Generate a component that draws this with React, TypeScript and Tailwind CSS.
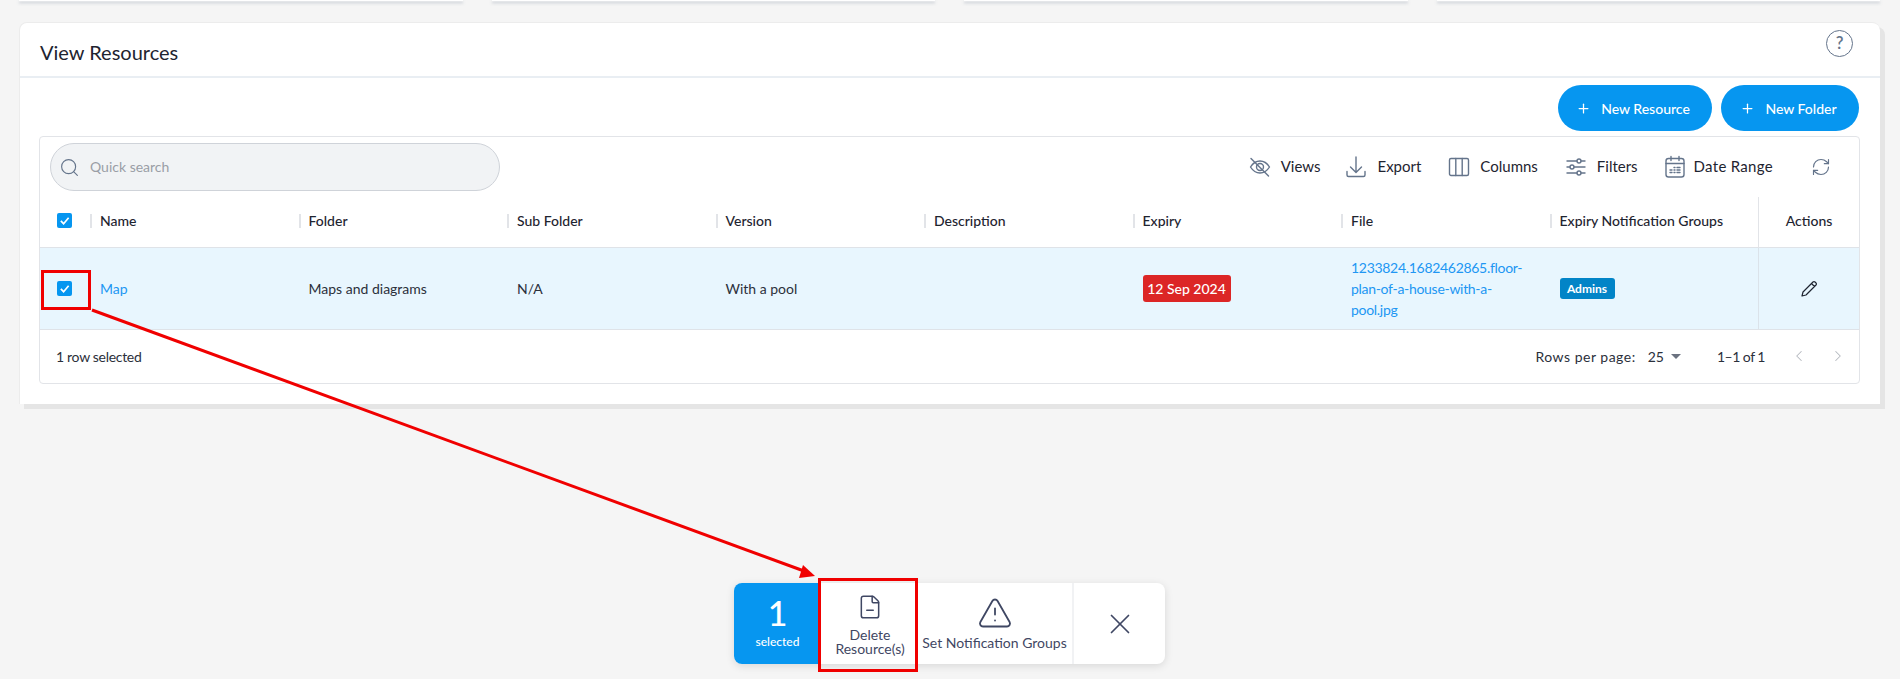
import { ChevronLeft, ChevronRight, FileMinus, Plus, RefreshCw, Search, TriangleAlert, X } from 'lucide-react';

const FONT = "font-['Lato',sans-serif]";

const COLUMNS = ['Name', 'Folder', 'Sub Folder', 'Version', 'Description', 'Expiry', 'File', 'Expiry Notification Groups'];

function Check() {
  return (
    <span className="w-[15px] h-[15px] rounded-[2px] bg-[#0696f0] flex items-center justify-center shrink-0">
      <svg width="11" height="11" viewBox="0 0 12 12" fill="none" stroke="white" strokeWidth="1.8">
        <path d="M2 6.5 5 9.5 10.5 3" />
      </svg>
    </span>
  );
}

function ToolIcon({ name }: { name: string }) {
  const common = { fill: 'none', stroke: '#64748b', strokeWidth: 1.4, strokeLinecap: 'round' as const, strokeLinejoin: 'round' as const };
  if (name === 'views') {
    return (
      <svg width="24" height="24" viewBox="0 0 24 24" {...common}>
        <path d="M2.5 12C5 8 8 6 12 6s7 2 9.500 6c-2.500 4-5.500 6-9.500 6s-7-2-9.500-6Z" />
        <circle cx="12" cy="12" r="3.500" />
        <path d="M3 3.500 20.500 21" />
      </svg>
    );
  }
  if (name === 'export') {
    return (
      <svg width="24" height="24" viewBox="0 0 24 24" {...common}>
        <path d="M12 2v15M6.500 12l5.500 5.500 5.500-5.500" />
        <path d="M3 16.500V20a1.500 1.500 0 0 0 1.500 1.500h15A1.500 1.500 0 0 0 21 20v-3.500" />
      </svg>
    );
  }
  if (name === 'columns') {
    return (
      <svg width="22" height="22" viewBox="0 0 22 22" {...common}>
        <rect x="1.500" y="2.500" width="19" height="17" rx="1.500" />
        <path d="M7.800 2.500v17M14.200 2.500v17" />
      </svg>
    );
  }
  if (name === 'filters') {
    return (
      <svg width="22" height="22" viewBox="0 0 22 22" {...common}>
        <path d="M2 5h10M16 5h4M2 11h3M9 11h11M2 17h10M16 17h4" />
        <circle cx="14" cy="5" r="2" />
        <circle cx="7" cy="11" r="2" />
        <circle cx="14" cy="17" r="2" />
      </svg>
    );
  }
  return (
    <svg width="22" height="24" viewBox="0 0 22 24" {...common}>
      <rect x="2" y="3.500" width="18" height="18.500" rx="2.500" />
      <path d="M2 8.500h18M7 1.500v4M15 1.500v4" />
      <path d="M6 17.500h2M6 15h2M10 17.500h1M10 15h1M10 12.500h1M13 17.500h3M13 15h3M13 12.500h3" />
    </svg>
  );
}

function Tool({ icon, label, className }: { icon: string; label: string; className: string }) {
  return (
    <div className={`flex items-center ${className}`}>
      <ToolIcon name={icon} />
      <span className="text-[15px] text-[#1e2430] pb-[2px]">{label}</span>
    </div>
  );
}

function Cell({ children, className = '' }: { children?: React.ReactNode; className?: string }) {
  return <div className={`w-[208.500px] pl-[10px] flex items-center ${className}`}>{children}</div>;
}

export default function App() {
  return (
    <div className={`${FONT} relative w-[1900px] h-[679px] overflow-hidden bg-[#f5f5f5] text-[#2b303b]`}>
      {/* TOP CARDS */}
      <div className="flex gap-[29px] pl-[19px] pr-[20px] h-[1px]">
        {[0, 1, 2, 3].map((i) => (
          <div key={i} className="flex-1 h-[1px] bg-white shadow-[0_2px_3px_rgba(100,116,139,0.5)]" />
        ))}
      </div>

      {/* VIEW RESOURCES */}
      <div className="mt-[21px] ml-[19px] w-[1861px] h-[382px] bg-white rounded-tl-lg rounded-tr-lg border-l border-t border-[#ececec] shadow-[5px_5px_0_#e5e5e5]">
        <div className="h-[55px] border-b-2 border-[#e9eef3] flex items-center justify-between pl-[20px] pr-[27px]">
          <h1 className="text-[20px] text-[#1e2430] mt-[4px]">View Resources</h1>
          <span className="w-[27px] h-[27px] rounded-full border border-[#64748b] flex items-center justify-center text-[17px] font-semibold text-[#64748b] mt-[-13px]">
            ?
          </span>
        </div>

        <div className="flex justify-end gap-[9px] pr-[21px] pt-[7px]">
          <button className="h-[46px] w-[154px] pr-[4px] rounded-full bg-[#0696f0] text-white text-[14px] font-medium flex items-center justify-center gap-[10px]">
            <Plus size={15} />
            New Resource
          </button>
          <button className="h-[46px] w-[138px] pr-[3px] rounded-full bg-[#0696f0] text-white text-[14px] font-medium flex items-center justify-center gap-[10px]">
            <Plus size={15} />
            New Folder
          </button>
        </div>

        <div className="mt-[5px] ml-[19px] w-[1821px] h-[248px] border border-[#e2e4e8] rounded-[4px]">
          {/* TOOLBAR */}
          <div className="h-[60px] flex items-center justify-between pl-[10px] pr-[28px]">
            <div className="w-[450px] h-[48px] rounded-full bg-[#f1f3f5] border border-[#cfd3d9] flex items-center pl-[8px] gap-[10px]">
              <Search size={21} strokeWidth={1.3} className="text-[#64748b]" />
              <span className="text-[14px] text-[#9a9ea6] pb-[2px]">Quick search</span>
            </div>
            <div className="flex items-center">
              <Tool icon="views" label="Views" className="gap-[9px]" />
              <Tool icon="export" label="Export" className="gap-[9px] ml-[24px]" />
              <Tool icon="columns" label="Columns" className="gap-[10px] ml-[27px]" />
              <Tool icon="filters" label="Filters" className="gap-[10px] ml-[27px]" />
              <Tool icon="calendar" label="Date Range" className="gap-[8px] ml-[26px] tracking-[0.3px]" />
              <RefreshCw size={20} strokeWidth={1.4} className="text-[#64748b] ml-[38px]" />
            </div>
          </div>

          {/* HEADER */}
          <div className="h-[51px] flex border-b border-[#dfe3e8] text-[14px] font-medium text-[#1e2430]">
            <div className="w-[50px] flex items-center pl-[17px] pb-[3px]">
              <Check />
            </div>
            {COLUMNS.map((c) => (
              <div key={c} className="w-[208.500px] flex items-center pb-[3px]">
                <span className="w-[2px] h-[14px] bg-[#e2e4e8] mr-[8px]" />
                {c}
              </div>
            ))}
            <div className="flex-1 flex items-center justify-center border-l border-[#e2e4e8] pb-[3px]">Actions</div>
          </div>

          {/* ROW */}
          <div className="h-[82px] flex bg-[#e8f6fe] border-b border-[#dfe3e8] text-[14px]">
            <div className="w-[50px] flex items-center pl-[17px] pb-[1px]">
              <Check />
            </div>
            <Cell className="text-[#2196f3]">Map</Cell>
            <Cell>Maps and diagrams</Cell>
            <Cell>N/A</Cell>
            <Cell>With a pool</Cell>
            <Cell />
            <div className="w-[208.500px] pl-[10px] flex items-center">
              <span className="h-[27px] w-[88px] rounded-[3px] bg-[#dc2626] text-white font-medium flex items-center justify-center">
                12 Sep 2024
              </span>
            </div>
            <div className="w-[208.500px] pl-[10px] flex items-center">
              <span className="w-[170px] text-[#2196f3] leading-[21px] tracking-[-0.3px]">
                1233824.1682462865.floor-plan-of-a-house-with-a-pool.jpg
              </span>
            </div>
            <div className="w-[208.500px] pl-[10px] flex items-center">
              <span className="h-[21px] w-[55px] rounded-[3px] bg-[#0284c7] text-white text-[12px] font-bold flex items-center justify-center">
                Admins
              </span>
            </div>
            <div className="flex-1 flex items-center justify-center border-l border-[#dbe3ea]">
              <svg width="18" height="18" viewBox="0 0 18 18" fill="none" stroke="#1e2430" strokeWidth="1.2" strokeLinejoin="round">
                <path d="M2 16l1-4L13 2a1.400 1.400 0 0 1 2 0l1 1a1.400 1.400 0 0 1 0 2L6 15l-4 1ZM11.500 3.500l3 3" />
              </svg>
            </div>
          </div>

          {/* FOOTER */}
          <div className="h-[52px] flex items-center justify-between pl-[16px] pr-[12px] text-[14px]">
            <span className="tracking-[-0.3px]">1 row selected</span>
            <div className="flex items-center">
              <span className="tracking-[0.5px]">Rows per page:</span>
              <span className="ml-[12px]">25</span>
              <span className="ml-[7px] w-0 h-0 border-x-[5px] border-x-transparent border-t-[5px] border-t-[#6b7280]" />
              <span className="ml-[36px] tracking-[-0.5px]">1–1 of 1</span>
              <ChevronLeft size={18} strokeWidth={1.4} className="text-[#b5b9bf] ml-[25px]" />
              <ChevronRight size={18} strokeWidth={1.4} className="text-[#b5b9bf] ml-[21px]" />
            </div>
          </div>
        </div>
      </div>

      {/* SELECTION BAR */}
      <div className="flex justify-center mt-[179px] pr-[1px]">
        <div className="w-[431px] h-[81px] flex rounded-lg bg-white shadow-[0_2px_8px_rgba(0,0,0,0.12)]">
          <div className="w-[87px] rounded-l-lg bg-[#0696f0] text-white flex flex-col items-center justify-center pb-[2px]">
            <span className="text-[34px] leading-[34px] font-medium">1</span>
            <span className="text-[12px] leading-[16px] font-medium mt-[4px]">selected</span>
          </div>
          <div className="w-[98px] flex flex-col items-center pt-[11px] text-[14px] leading-[14px] text-[#3f4763] text-center">
            <FileMinus size={26} strokeWidth={1.4} className="mb-[8px]" />
            Delete
            <br />
            Resource(s)
          </div>
          <div className="w-[155px] pr-[2px] flex flex-col items-center pt-[12px] text-[14px] leading-[16px] text-[#3f4763] border-r-2 border-[#f1f2f4]">
            <TriangleAlert size={36} strokeWidth={1.2} className="mb-[4px]" />
            Set Notification Groups
          </div>
          <div className="flex-1 flex items-center justify-center text-[#3f4763]">
            <X size={34} strokeWidth={1.2} />
          </div>
        </div>
      </div>

      {/* ANNOTATIONS */}
      <div className="absolute left-[41px] top-[270px] w-[50px] h-[40px] border-[3px] border-[#f00000]" />
      <div className="absolute left-[818px] top-[578px] w-[100px] h-[94px] border-[3px] border-[#f00000]" />
      <svg className="absolute left-0 top-0 pointer-events-none" width="1900" height="679">
        <path d="M92 310 804 571" stroke="#f00000" strokeWidth="3" />
        <path d="M815 576 799 578 803 565Z" fill="#f00000" />
      </svg>
    </div>
  );
}
